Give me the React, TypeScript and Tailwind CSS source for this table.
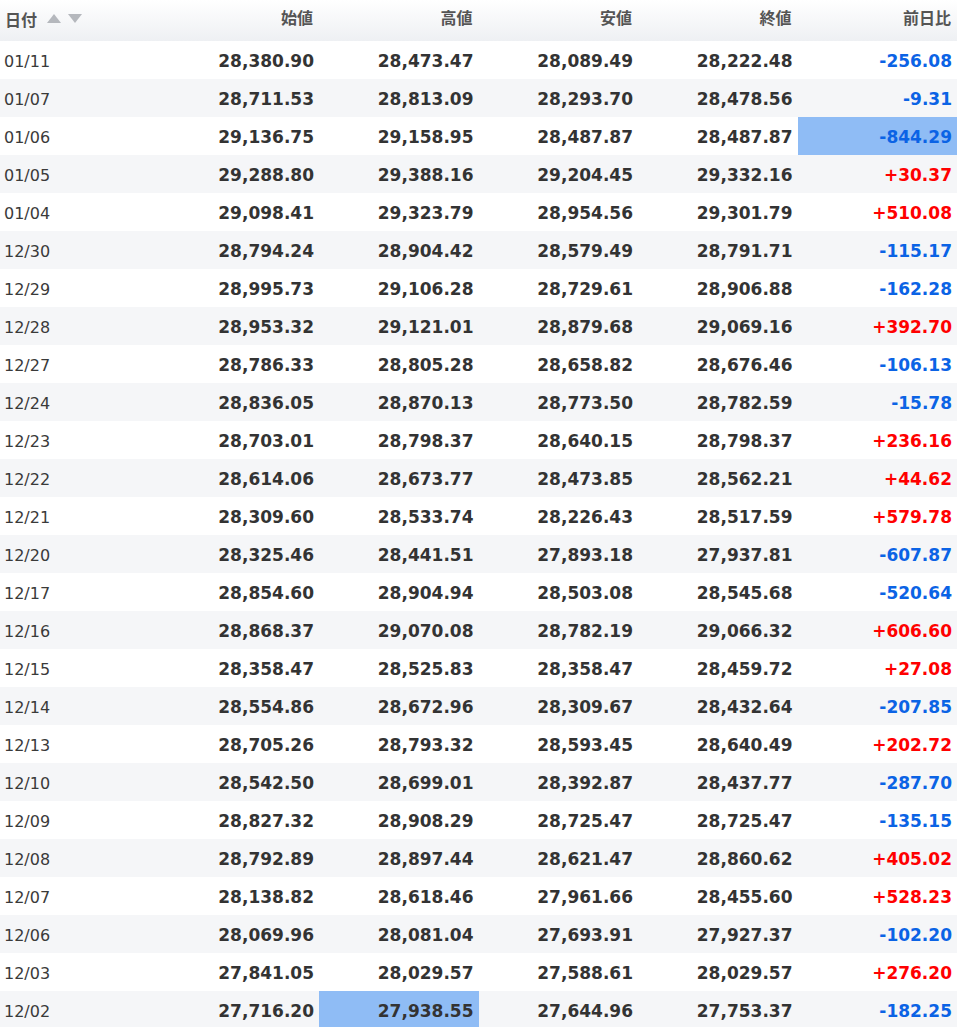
import React from 'react';

type Row = [string, string, string, string, string, string];

const rows: Row[] = [
    ['01/11', '28,380.90', '28,473.47', '28,089.49', '28,222.48', '-256.08'],
    ['01/07', '28,711.53', '28,813.09', '28,293.70', '28,478.56', '-9.31'],
    ['01/06', '29,136.75', '29,158.95', '28,487.87', '28,487.87', '-844.29'],
    ['01/05', '29,288.80', '29,388.16', '29,204.45', '29,332.16', '+30.37'],
    ['01/04', '29,098.41', '29,323.79', '28,954.56', '29,301.79', '+510.08'],
    ['12/30', '28,794.24', '28,904.42', '28,579.49', '28,791.71', '-115.17'],
    ['12/29', '28,995.73', '29,106.28', '28,729.61', '28,906.88', '-162.28'],
    ['12/28', '28,953.32', '29,121.01', '28,879.68', '29,069.16', '+392.70'],
    ['12/27', '28,786.33', '28,805.28', '28,658.82', '28,676.46', '-106.13'],
    ['12/24', '28,836.05', '28,870.13', '28,773.50', '28,782.59', '-15.78'],
    ['12/23', '28,703.01', '28,798.37', '28,640.15', '28,798.37', '+236.16'],
    ['12/22', '28,614.06', '28,673.77', '28,473.85', '28,562.21', '+44.62'],
    ['12/21', '28,309.60', '28,533.74', '28,226.43', '28,517.59', '+579.78'],
    ['12/20', '28,325.46', '28,441.51', '27,893.18', '27,937.81', '-607.87'],
    ['12/17', '28,854.60', '28,904.94', '28,503.08', '28,545.68', '-520.64'],
    ['12/16', '28,868.37', '29,070.08', '28,782.19', '29,066.32', '+606.60'],
    ['12/15', '28,358.47', '28,525.83', '28,358.47', '28,459.72', '+27.08'],
    ['12/14', '28,554.86', '28,672.96', '28,309.67', '28,432.64', '-207.85'],
    ['12/13', '28,705.26', '28,793.32', '28,593.45', '28,640.49', '+202.72'],
    ['12/10', '28,542.50', '28,699.01', '28,392.87', '28,437.77', '-287.70'],
    ['12/09', '28,827.32', '28,908.29', '28,725.47', '28,725.47', '-135.15'],
    ['12/08', '28,792.89', '28,897.44', '28,621.47', '28,860.62', '+405.02'],
    ['12/07', '28,138.82', '28,618.46', '27,961.66', '28,455.60', '+528.23'],
    ['12/06', '28,069.96', '28,081.04', '27,693.91', '27,927.37', '-102.20'],
    ['12/03', '27,841.05', '28,029.57', '27,588.61', '28,029.57', '+276.20'],
    ['12/02', '27,716.20', '27,938.55', '27,644.96', '27,753.37', '-182.25'],
];

// cells that are highlighted in the view: row-col
const highlighted = ['2-5', '25-2'];

const headers = ['始値', '高値', '安値', '終値', '前日比'];

export default function App() {
    return (
        <div className="w-[957px] bg-white font-['DejaVu_Sans','Noto_Sans_CJK_JP',sans-serif] text-[#333]">
            {/* Header */}
            <div className="grid grid-cols-6 h-[41px] bg-gradient-to-b from-white to-[#eef0f3] text-[16px] font-bold text-[#555]">
                <div className="flex items-center pl-[5px] gap-[10px]">
                    <span>日付</span>
                    <span className="flex items-center gap-[7px] mt-[-4px]">
                        <svg width="14" height="9" viewBox="0 0 14 9"><path d="M0 9 L7 0 L14 9 Z" fill="#b5b8bd" /></svg>
                        <svg width="14" height="9" viewBox="0 0 14 9"><path d="M0 0 L14 0 L7 9 Z" fill="#b5b8bd" /></svg>
                    </span>
                </div>
                {headers.map((h) => (
                    <div key={h} className="flex items-center justify-end pr-[6px] mt-[-4px]">{h}</div>
                ))}
            </div>

            {/* Body */}
            {rows.map((r, i) => (
                <div key={r[0]} className={`grid grid-cols-6 h-[38px] ${i % 2 === 1 ? 'bg-[#f5f6f8]' : 'bg-white'}`}>
                    <div className="flex items-center pl-[4px] pt-[4px] text-[16px] text-[#3a3a3a]">{r[0]}</div>
                    {r.slice(1).map((v, j) => {
                        const col = j + 1;
                        const isChange = col === 5;
                        const color = isChange ? (v.startsWith('+') ? 'text-[#ff0000]' : 'text-[#0b63e5]') : 'text-[#333]';
                        const hl = highlighted.includes(`${i}-${col}`);
                        return (
                            <div
                                key={col}
                                className={`flex items-center justify-end pr-[5px] pt-[3px] text-[17px] font-bold ${color} ${hl ? 'bg-[#8fbcf5]' : ''}`}
                            >
                                {v}
                            </div>
                        );
                    })}
                </div>
            ))}
        </div>
    );
}
